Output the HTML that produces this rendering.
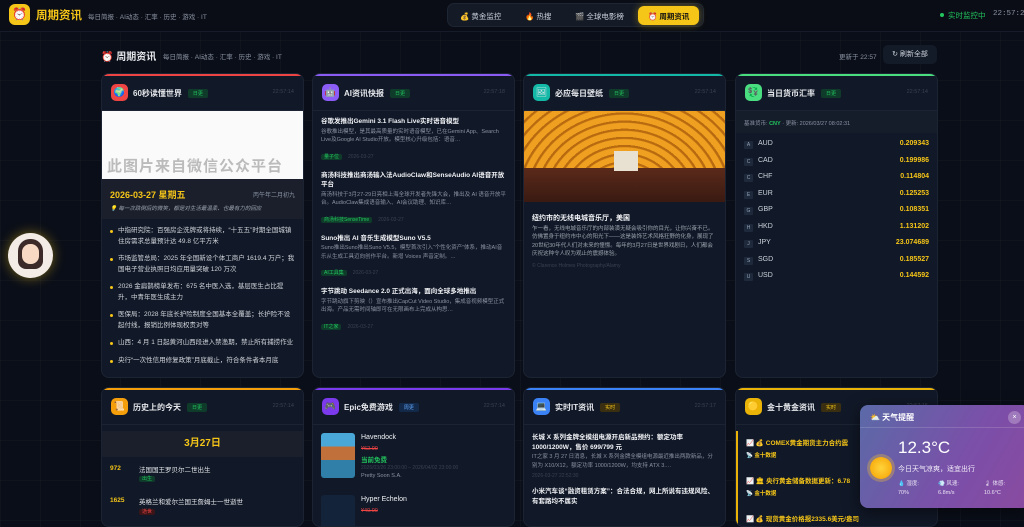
<!DOCTYPE html>
<html><head><meta charset="utf-8"><style>
*{margin:0;padding:0;box-sizing:border-box}
body{width:1024px;height:513px;overflow:hidden;background:#0a0e18;font-family:"Liberation Sans","Noto Sans CJK SC",sans-serif;color:#e5e7eb;position:relative;
background-image:linear-gradient(rgba(255,255,255,.025) 1px,transparent 1px),linear-gradient(90deg,rgba(255,255,255,.025) 1px,transparent 1px);background-size:40px 40px}
.hdr{position:absolute;left:0;top:0;width:1024px;height:32px;background:#0a0d15;border-bottom:1px solid #161c2a}
.logo{position:absolute;left:9px;top:4px;width:21px;height:21px;border-radius:6px;background:#f5c518;font-size:12px;text-align:center;line-height:21px}
.brand{position:absolute;left:36px;top:7px;font-size:11.5px;font-weight:bold;color:#f5c518}
.sub{position:absolute;left:88px;top:11px;font-size:6.5px;color:#8b93a3}
.tabs{position:absolute;left:447px;top:3px;width:257px;height:24px;background:#141a26;border-radius:7px;border:1px solid #1e2533}
.tab{position:absolute;top:7px;font-size:7.5px;color:#cbd2dc}
.tab.act{top:2px;height:19px;background:#f5c518;color:#111;border-radius:6px;padding:5px 10px;font-weight:bold;box-shadow:0 0 8px rgba(245,197,24,.4)}
.live{position:absolute;left:940px;top:10px;font-size:7.5px;color:#22c55e}
.live:before{content:"";display:inline-block;width:4px;height:4px;border-radius:50%;background:#22c55e;margin-right:4px;vertical-align:1px}
.clk{position:absolute;left:993px;top:10px;font-size:7.5px;color:#8b93a3;font-family:"Liberation Mono",monospace;white-space:nowrap}
.t2{position:absolute;left:101px;top:48px;font-size:10px;font-weight:bold}
.t2s{position:absolute;left:163px;top:51px;font-size:6.5px;color:#8b93a3}
.upd{position:absolute;left:839px;top:51px;font-size:6.5px;color:#8b93a3}
.rf{position:absolute;left:883px;top:45px;width:54px;height:19px;background:#141b28;border-radius:5px;font-size:7px;color:#cbd2dc;text-align:center;line-height:19px}
.card{position:absolute;width:203px;background:#111827;border-radius:8px;border:1px solid #1c2433;overflow:hidden}
.card .bar{height:2px}
.ch{height:35px;border-bottom:1px solid #1c2433;position:relative}
.ic{position:absolute;left:9px;top:8px;width:17px;height:17px;border-radius:5px;font-size:9px;text-align:center;line-height:17px}
.ct{position:absolute;left:31px;top:12px;font-size:8px;font-weight:bold;color:#e5e7eb}
.bd{display:inline-block;margin-left:6px;font-size:5px;padding:1px 5px;border-radius:2px;background:#0f3b2a;color:#22c55e;vertical-align:1px;font-weight:normal}
.tm{position:absolute;right:9px;top:13px;font-size:5.5px;color:#3a4354}
.li{font-size:6.5px;line-height:10.5px;color:#d1d5db;padding-left:16px;position:relative;margin-bottom:7px;padding-right:8px}
.li:before{content:"";position:absolute;left:8px;top:4px;width:3px;height:3px;background:#f5c518;border-radius:50%}
.ni{padding:0 8px;margin-bottom:8px}
.nt{font-size:6.5px;font-weight:bold;color:#f1f3f6;line-height:9.5px}
.nd{font-size:5.5px;color:#8b93a3;line-height:8.5px;margin-top:1px}
.tg{display:inline-block;font-size:5px;line-height:6px;padding:0 3px;background:#0f3b2a;color:#22c55e;border-radius:2px;margin-top:2px}
.dt{font-size:5px;color:#3a4354;margin-left:6px}
.rr{position:relative;height:16.5px;font-size:7px}
.rr .l{position:absolute;left:8px;top:3px;width:9px;height:8px;background:#1e293b;font-size:5px;color:#94a3b8;text-align:center;line-height:8px;border-radius:1px}
.rr .c{position:absolute;left:22px;top:2px;color:#cbd2dc}
.rr .v{position:absolute;right:8px;top:2px;color:#f5c518;font-weight:bold}
</style></head><body>
<div class="hdr">
<div class="logo">⏰</div><div class="brand">周期资讯</div>
<div class="sub">每日简报 · AI动态 · 汇率 · 历史 · 游戏 · IT</div>
<div class="tabs">
<div class="tab" style="left:12px">💰 黄金监控</div>
<div class="tab" style="left:77px">🔥 热搜</div>
<div class="tab" style="left:127px">🎬 全球电影榜</div>
<div class="tab act" style="left:190px">⏰ 周期资讯</div>
</div>
<div class="live">实时监控中</div><div class="clk">22:57:2</div>
</div>
<div style="position:absolute;left:8px;top:233px;width:45px;height:45px;border-radius:50%;background:#f3ece6;box-shadow:0 0 12px rgba(245,197,24,.45);overflow:hidden"><div style="position:absolute;left:10px;top:6px;width:25px;height:30px;border-radius:12px 12px 8px 8px;background:#3b2a28"></div><div style="position:absolute;left:14px;top:11px;width:17px;height:20px;border-radius:8px;background:#f7d9c4"></div></div>
<div class="t2">⏰ 周期资讯</div><div class="t2s">每日简报 · AI动态 · 汇率 · 历史 · 游戏 · IT</div>
<div class="upd">更新于 22:57</div><div class="rf">↻ 刷新全部</div>

<div class="card" style="left:101px;top:73px;height:305px"><div class="bar" style="background:#ef4444"></div>
<div class="ch"><div class="ic" style="background:#ef4444">🌍</div><div class="ct">60秒读懂世界<span class="bd">日更</span></div><div class="tm">22:57:14</div></div>
<div style="height:68px;background:#fafafa;position:relative"><div style="position:absolute;left:5px;top:44px;font-size:15px;color:#bbb;font-weight:bold;letter-spacing:1px">此图片来自微信公众平台</div></div>
<div style="height:40px;background:#1a1f2b;position:relative"><div style="position:absolute;left:8px;top:9px;font-size:9px;font-weight:bold;color:#f5c518">2026-03-27 星期五</div><div style="position:absolute;right:8px;top:11px;font-size:6px;color:#8b93a3">丙午年二月初九</div><div style="position:absolute;left:8px;top:25px;font-size:5.5px;color:#9ca3af;font-style:italic">💡 每一次跌倒后的微笑，都是对生活最温柔、也最有力的回应</div></div>
<div style="padding-top:7px">
<div class="li">中指研究院：百强房企洗牌或将持续，“十五五”时期全国城镇住房需求总量预计达 49.8 亿平方米</div>
<div class="li">市场监管总局：2025 年全国新设个体工商户 1619.4 万户；我国电子营业执照日均应用量突破 120 万次</div>
<div class="li">2026 金扁鹊榜单发布：675 名中医入选，基层医生占比提升，中青年医生成主力</div>
<div class="li">医保局：2028 年底长护险制度全国基本全覆盖；长护险不设起付线，报销比例体现权责对等</div>
<div class="li">山西：4 月 1 日起黄河山西段进入禁渔期，禁止所有捕捞作业</div>
<div class="li">央行“一次性信用修复政策”月底截止，符合条件者本月底</div>
</div></div>

<div class="card" style="left:312px;top:73px;height:305px"><div class="bar" style="background:#8b5cf6"></div>
<div class="ch"><div class="ic" style="background:#8b5cf6">🤖</div><div class="ct">AI资讯快报<span class="bd">日更</span></div><div class="tm">22:57:18</div></div>
<div style="padding-top:6px">
<div class="ni"><div class="nt">谷歌发推出Gemini 3.1 Flash Live实时语音模型</div><div class="nd">谷歌推出模型，是其最高质量的实时语音模型，已在Gemini App、Search Live及Google AI Studio开放。模型核心升级包括：语音…</div><span class="tg">量子位</span><span class="dt">2026-03-27</span></div>
<div class="ni"><div class="nt">商汤科技推出商汤输入法AudioClaw和SenseAudio AI语音开放平台</div><div class="nd">商汤科技于3月27-29日亮相上海全球开发者先锋大会，推出及 AI 语音开放平台。AudioClaw集成语音输入、AI会议助理、知识库…</div><span class="tg">商汤科技SenseTime</span><span class="dt">2026-03-27</span></div>
<div class="ni"><div class="nt">Suno推出 AI 音乐生成模型Suno V5.5</div><div class="nd">Suno推出Suno推出Suno V5.5，模型首次引入“个性化资产”体系，推动AI音乐从生成工具迈向创作平台。新增 Voices 声音定制。…</div><span class="tg">AI工具集</span><span class="dt">2026-03-27</span></div>
<div class="ni"><div class="nt">字节跳动 Seedance 2.0 正式出海，面向全球多地推出</div><div class="nd">字节跳动旗下剪映（）宣布推出CapCut Video Studio，集成音视频模型正式出海。产品无需时间轴即可在无限画布上完成从构思…</div><span class="tg">IT之家</span><span class="dt">2026-03-27</span></div>
</div></div>

<div class="card" style="left:523px;top:73px;height:305px"><div class="bar" style="background:#14b8a6"></div>
<div class="ch"><div class="ic" style="background:#14b8a6">🖼</div><div class="ct">必应每日壁纸<span class="bd">日更</span></div><div class="tm">22:57:14</div></div>
<div style="height:91px;background:radial-gradient(ellipse at 50% 95%,#2a1a10 0 25%,transparent 26%),repeating-radial-gradient(ellipse at 50% 100%,#f0a020 0 6px,#b86a10 7px 9px),#c07018;position:relative"><div style="position:absolute;left:0;right:0;bottom:0;height:34px;background:linear-gradient(#5a2a1a,#3a1a12)"></div><div style="position:absolute;left:90px;top:40px;width:24px;height:20px;background:#e8e0d0"></div></div>
<div style="padding:12px 8px"><div class="nt" style="font-size:7px">纽约市的无线电城音乐厅，美国</div><div class="nd" style="color:#9ca3af">乍一看，无线电城音乐厅的内部装潢无疑会吸引你的目光，让你兴奋不已。仿佛置身于纽约市中心的阳光下——这是装饰艺术风格狂野的化身，展现了20世纪30年代人们对未来的憧憬。每年的3月27日是世界戏剧日，人们都会庆祝这种令人叹为观止的震撼体验。</div><div style="font-size:5px;color:#3a4354;margin-top:4px">© Clarence Holmes Photography/Alamy</div></div>
</div>

<div class="card" style="left:735px;top:73px;height:305px"><div class="bar" style="background:#4ade80"></div>
<div class="ch"><div class="ic" style="background:#4ade80">💱</div><div class="ct">当日货币汇率<span class="bd">日更</span></div><div class="tm">22:57:14</div></div>
<div style="height:22px;background:#151d2b;font-size:5.5px;color:#8b93a3;padding:8px 8px">基准货币: <b style="color:#22c55e">CNY</b> · 更新: 2026/03/27 08:02:31</div>
<div style="padding-top:5px">
<div class="rr"><span class="l">A</span><span class="c">AUD</span><span class="v">0.209343</span></div>
<div class="rr"><span class="l">C</span><span class="c">CAD</span><span class="v">0.199986</span></div>
<div class="rr"><span class="l">C</span><span class="c">CHF</span><span class="v">0.114804</span></div>
<div class="rr"><span class="l">E</span><span class="c">EUR</span><span class="v">0.125253</span></div>
<div class="rr"><span class="l">G</span><span class="c">GBP</span><span class="v">0.108351</span></div>
<div class="rr"><span class="l">H</span><span class="c">HKD</span><span class="v">1.131202</span></div>
<div class="rr"><span class="l">J</span><span class="c">JPY</span><span class="v">23.074689</span></div>
<div class="rr"><span class="l">S</span><span class="c">SGD</span><span class="v">0.185527</span></div>
<div class="rr"><span class="l">U</span><span class="c">USD</span><span class="v">0.144592</span></div>
</div></div>

<div class="card" style="left:101px;top:387px;height:140px"><div class="bar" style="background:#f59e0b"></div>
<div class="ch"><div class="ic" style="background:#f59e0b">📜</div><div class="ct">历史上的今天<span class="bd">日更</span></div><div class="tm">22:57:14</div></div>
<div style="margin-top:6px;height:26px;background:#1a1f2b;text-align:center;font-size:10px;font-weight:bold;color:#f5c518;line-height:26px">3月27日</div>
<div style="position:relative;height:60px;font-size:6.5px">
<div style="position:absolute;left:8px;top:8px;color:#f5c518;font-weight:bold">972</div><div style="position:absolute;left:37px;top:7px;color:#e5e7eb">法国国王罗贝尔二世出生</div><span class="tg" style="position:absolute;left:37px;top:17px">出生</span>
<div style="position:absolute;left:8px;top:40px;color:#f5c518;font-weight:bold">1625</div><div style="position:absolute;left:37px;top:39px;color:#e5e7eb">英格兰和爱尔兰国王詹姆士一世逝世</div><span class="tg" style="position:absolute;left:37px;top:50px;background:#3b1518;color:#ef4444">逝世</span>
</div></div>

<div class="card" style="left:312px;top:387px;height:140px"><div class="bar" style="background:#7c3aed"></div>
<div class="ch"><div class="ic" style="background:#7c3aed">🎮</div><div class="ct">Epic免费游戏<span class="bd" style="background:#13294a;color:#60a5fa">周更</span></div><div class="tm">22:57:14</div></div>
<div style="position:relative;height:100px">
<div style="position:absolute;left:8px;top:8px;width:34px;height:45px;border-radius:3px;background:linear-gradient(#4aa8d8 0 30%,#c0703a 30% 60%,#2f7fa8 60%)"></div>
<div style="position:absolute;left:48px;top:9px;font-size:7px;color:#f1f3f6">Havendock</div>
<div style="position:absolute;left:48px;top:21px;font-size:5.5px;color:#ef4444;text-decoration:line-through">¥62.00</div>
<div style="position:absolute;left:48px;top:29px;font-size:6.5px;color:#22c55e;font-weight:bold">当前免费</div>
<div style="position:absolute;left:48px;top:40px;font-size:5px;color:#3a4354">2026/03/26 23:00:00 – 2026/04/02 23:00:00</div>
<div style="position:absolute;left:48px;top:48px;font-size:5.5px;color:#8b93a3">Pretty Soon S.A.</div>
<div style="position:absolute;left:8px;top:70px;width:34px;height:40px;border-radius:3px;background:#13233a"></div>
<div style="position:absolute;left:48px;top:71px;font-size:7px;color:#f1f3f6">Hyper Echelon</div>
<div style="position:absolute;left:48px;top:83px;font-size:5.5px;color:#ef4444;text-decoration:line-through">¥40.00</div>
</div></div>

<div class="card" style="left:523px;top:387px;height:140px"><div class="bar" style="background:#3b82f6"></div>
<div class="ch"><div class="ic" style="background:#3b82f6">💻</div><div class="ct">实时IT资讯<span class="bd" style="background:#3a2f10;color:#f5c518">实时</span></div><div class="tm">22:57:17</div></div>
<div style="padding-top:8px">
<div class="ni"><div class="nt">长城 X 系列金牌全模组电源开启新品预约：额定功率 1000/1200W，售价 699/799 元</div><div class="nd">IT之家 3 月 27 日消息，长城 X 系列金牌全模组电源最近推出两款新品，分别为 X10/X12，额定功率 1000/1200W，均支持 ATX 3.…</div><div style="font-size:5px;color:#3a4354;margin-top:3px">2026-03-27 22:52:30</div></div>
<div class="ni"><div class="nt">小米汽车谈“融资租赁方案”：合法合规，网上所说有违规风险、有套路均不属实</div></div>
</div></div>

<div class="card" style="left:735px;top:387px;height:140px"><div class="bar" style="background:#eab308"></div>
<div class="ch"><div class="ic" style="background:#eab308">🟡</div><div class="ct">金十黄金资讯<span class="bd" style="background:#3a2f10;color:#f5c518">实时</span></div><div class="tm">22:57:15</div></div>
<div style="position:relative;height:100px;border-left:2px solid #eab308;margin-top:6px;font-size:6.5px;font-weight:bold;color:#f5c518">
<div style="position:absolute;left:8px;top:6px;white-space:nowrap">📈 💰 COMEX黄金期货主力合约震</div>
<div style="position:absolute;left:8px;top:20px;font-size:5.5px">📡 金十数据</div>
<div style="position:absolute;left:8px;top:44px;white-space:nowrap">📈 🏛 央行黄金储备数据更新：6.78</div>
<div style="position:absolute;left:8px;top:58px;font-size:5.5px">📡 金十数据</div>
<div style="position:absolute;left:8px;top:82px;white-space:nowrap">📈 💰 现货黄金价格报2335.6美元/盎司</div>
</div></div>

<div style="position:absolute;left:860px;top:405px;width:170px;height:103px;border-radius:8px;background:linear-gradient(120deg,#5b6aa8,#7b4fa8 60%,#8a4aa0);box-shadow:0 4px 16px rgba(0,0,0,.5);overflow:hidden">
<div style="height:23px;border-bottom:1px solid rgba(255,255,255,.15);font-size:8px;font-weight:bold;color:#fff;padding:7px 10px">⛅ 天气提醒</div>
<div style="position:absolute;left:148px;top:6px;width:13px;height:13px;border-radius:50%;background:rgba(255,255,255,.25);color:#fff;font-size:7px;text-align:center;line-height:13px">×</div>
<div style="position:absolute;left:10px;top:52px;width:22px;height:22px;border-radius:50%;background:radial-gradient(#ffd43b,#f59f00);box-shadow:0 0 0 3px rgba(255,200,40,.3)"></div>
<div style="position:absolute;left:38px;top:33px;font-size:17px;color:#fff">12.3°C</div>
<div style="position:absolute;left:38px;top:59px;font-size:7px;color:#f3eefa">今日天气凉爽，适宜出行</div>
<div style="position:absolute;left:38px;top:75px;font-size:5.5px;color:#e9e2f5;line-height:9px">💧 湿度:<br>70%</div>
<div style="position:absolute;left:78px;top:75px;font-size:5.5px;color:#e9e2f5;line-height:9px">💨 风速:<br>6.8m/s</div>
<div style="position:absolute;left:124px;top:75px;font-size:5.5px;color:#e9e2f5;line-height:9px">🌡 体感:<br>10.6°C</div>
</div>
</body></html>
